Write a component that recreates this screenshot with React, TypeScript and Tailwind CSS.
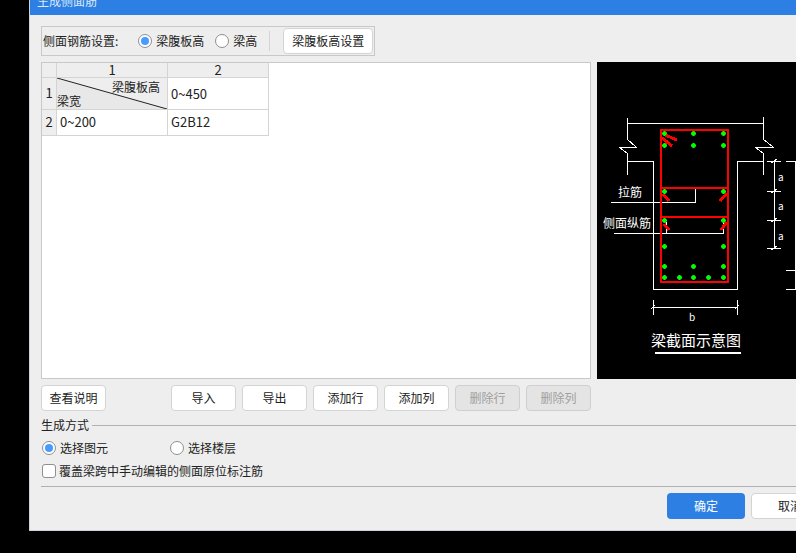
const font = { fontFamily: '"Noto Sans CJK SC", sans-serif' };

function Radio({ checked, label, className }: { checked?: boolean; label: string; className?: string }) {
  return (
    <div className={`flex items-center ${className ?? ''}`}>
      <span className="flex h-[14px] w-[14px] items-center justify-center rounded-full border border-[#8f8f8f] bg-white">
        {checked && <span className="h-[8px] w-[8px] rounded-full bg-[#4a9bff]" />}
      </span>
      <span className="ml-[4px] text-[12px] text-[#222]">{label}</span>
    </div>
  );
}

function Btn({ label, disabled, className }: { label: string; disabled?: boolean; className?: string }) {
  return (
    <button
      className={`flex h-[26px] w-[65px] items-center justify-center rounded-[4px] border text-[12px] ${
        disabled ? 'border-[#cfcfcf] bg-[#e4e4e4] text-[#a0a0a0]' : 'border-[#d4d4d4] bg-white text-[#222]'
      } ${className ?? ''}`}
    >
      {label}
    </button>
  );
}

function Drawing() {
  const dots = [
    [664, 133], [693, 133], [723, 133], [664, 145], [693, 145], [723, 145],
    [664, 191], [723, 191], [664, 220], [723, 220], [664, 246], [723, 246],
    [664, 266], [693, 266], [723, 266], [664, 277], [679, 277], [693, 277], [708, 277], [723, 277],
  ];
  const white = [
    'M627 118V139L636 147H619L627 153V175', 'M627 123H763', 'M763 117V139L773 147H755L763 153V175',
    'M627 161H653V289H737V161H763', 'M611 202H695V188', 'M614 233H723V220', 'M666 220V233',
    'M774 161V248', 'M767 161H781', 'M767 191H781', 'M767 220H781', 'M767 248H781',
    'M771 163L777 159', 'M771 193L777 189', 'M771 222L777 218', 'M771 250L777 246',
    'M786 161H796', 'M795 161V290', 'M786 270H796', 'M786 289H796',
    'M653 300V315', 'M737 300V315', 'M653 307H737', 'M651 309L655 305', 'M735 309L739 305',
  ];
  const red = [
    'M665 135L677 140', 'M662 138L672 146', 'M663 194L669 201', 'M727 193L720 201',
    'M664 224L669 230', 'M727 222L721 230',
  ];
  return (
    <svg viewBox="597 62 199 317" className="h-full w-full" shapeRendering="crispEdges">
      {white.map((d) => (
        <path key={d} d={d} fill="none" stroke="#fff" strokeWidth="1" />
      ))}
      <path d="M661 130H728V282H661Z M661 188H728 M661 217H728" fill="none" stroke="#f00" strokeWidth="2" />
      {red.map((d) => (
        <path key={d} d={d} fill="none" stroke="#f00" strokeWidth="3" />
      ))}
      {dots.map(([x, y]) => (
        <g key={`${x}-${y}`}>
          <path d={`M${x - 1} ${y - 2}h3v1h1v3h-1v1h-3v-1h-1v-3h1z`} fill="#00a800" />
          <path d={`M${x} ${y - 2}h1v1h1v1h1v1h-1v1h-1v1h-1v-1h-1v-1h-1v-1h1v-1h1z`} fill="#0f0" />
        </g>
      ))}
      <g fill="#fff" style={font} fontSize="12">
        <text x="618" y="197">拉筋</text>
        <text x="603" y="228">侧面纵筋</text>
        <text x="778" y="181" fontSize="10">a</text>
        <text x="778" y="210" fontSize="10">a</text>
        <text x="778" y="240" fontSize="10">a</text>
        <text x="689" y="321" fontSize="10">b</text>
        <text x="651" y="346" fontSize="15">梁截面示意图</text>
      </g>
      <path d="M655 353H741" stroke="#fff" strokeWidth="2" />
    </svg>
  );
}

function DataTable() {
  const cell = 'border-r border-b border-[#d4d4d4]';
  return (
    <div className="grid grid-cols-[15px_111px_101px] grid-rows-[15px_32px_26px] text-[13px] text-[#222]">
      <div className={`${cell} bg-[#eeeeee]`} />
      <div className={`${cell} bg-[#eeeeee] text-center leading-[14px]`}>1</div>
      <div className={`${cell} bg-[#eeeeee] text-center leading-[14px]`}>2</div>
      <div className={`${cell} flex items-center justify-center bg-[#eeeeee] pb-[2px]`}>1</div>
      <div className={`${cell} relative bg-[#eeeeee] text-[12px]`}>
        <svg viewBox="0 0 110 31" className="absolute inset-0 h-full w-full">
          <path d="M0 31V0L110 31Z" fill="#e8e8e8" />
          <path d="M0 0L110 31" stroke="#222" strokeWidth="1" />
        </svg>
        <span className="absolute right-[7px] top-0 leading-[18px]">梁腹板高</span>
        <span className="absolute bottom-0 left-0 leading-[16px]">梁宽</span>
      </div>
      <div className={`${cell} flex items-center pl-[3px]`}>0~450</div>
      <div className={`${cell} flex items-center justify-center bg-[#eeeeee] pb-[1px]`}>2</div>
      <div className={`${cell} flex items-center pb-[2px] pl-[3px]`}>0~200</div>
      <div className={`${cell} flex items-center pb-[2px] pl-[3px]`}>G2B12</div>
    </div>
  );
}

export default function App() {
  return (
    <div className="h-[553px] w-[796px] overflow-hidden bg-black pl-[29px]" style={font}>
      <div className="h-[531px] w-[800px] border-b border-l border-[#cdd3dc] bg-[#eeeeee]">
        <div className="h-[15px] overflow-hidden bg-[#2d7fe3] pl-[7px] text-[12px] leading-[16px] text-[#dce9fa]">
          <div className="-mt-[7px]">生成侧面筋</div>
        </div>

        <div className="pl-[11px] pt-[11px]">
          <div className="flex h-[30px] w-[334px] items-center border border-[#c8c8c8] pl-[1px]">
            <span className="text-[12px] text-[#222]">侧面钢筋设置:</span>
            <Radio checked label="梁腹板高" className="ml-[20px]" />
            <Radio label="梁高" className="ml-[11px]" />
            <div className="ml-[12px] h-[20px] w-px bg-[#d4d4d4]" />
            <Btn label="梁腹板高设置" className="ml-[13px] w-[90px]" />
          </div>

          <div className="mt-[6px] flex gap-[6px]">
            <div className="h-[317px] w-[550px] border border-[#c8c8c8] bg-white">
              <DataTable />
            </div>
            <div className="h-[317px] w-[199px] shrink-0 bg-black">
              <Drawing />
            </div>
          </div>

          <div className="mt-[6px] flex w-[550px] gap-[6px]">
            <Btn label="查看说明" className="mr-[59px]" />
            <Btn label="导入" />
            <Btn label="导出" />
            <Btn label="添加行" />
            <Btn label="添加列" />
            <Btn label="删除行" disabled />
            <Btn label="删除列" disabled />
          </div>

          <div className="mt-[5px] flex h-[18px] items-center">
            <span className="text-[12px] text-[#222]">生成方式</span>
            <div className="ml-[3px] h-px flex-1 bg-[#b0b0b0]" />
          </div>

          <div className="mt-[5px] flex h-[18px] pl-[1px]">
            <Radio checked label="选择图元" className="w-[128px]" />
            <Radio label="选择楼层" />
          </div>

          <div className="mt-[5px] flex h-[18px] items-center pl-[1px]">
            <span className="h-[14px] w-[14px] rounded-[3px] border border-[#8f8f8f] bg-white" />
            <span className="ml-[3px] text-[12px] text-[#222]">覆盖梁跨中手动编辑的侧面原位标注筋</span>
          </div>

          <div className="mt-[6px] h-px bg-[#b0b0b0]" />

          <div className="mt-[6px] flex gap-[6px] pl-[626px]">
            <button className="flex h-[26px] w-[78px] items-center justify-center rounded-[4px] bg-[#2d7fe3] text-[12px] text-white">
              确定
            </button>
            <Btn label="取消" className="w-[78px]" />
          </div>
        </div>
      </div>
    </div>
  );
}
